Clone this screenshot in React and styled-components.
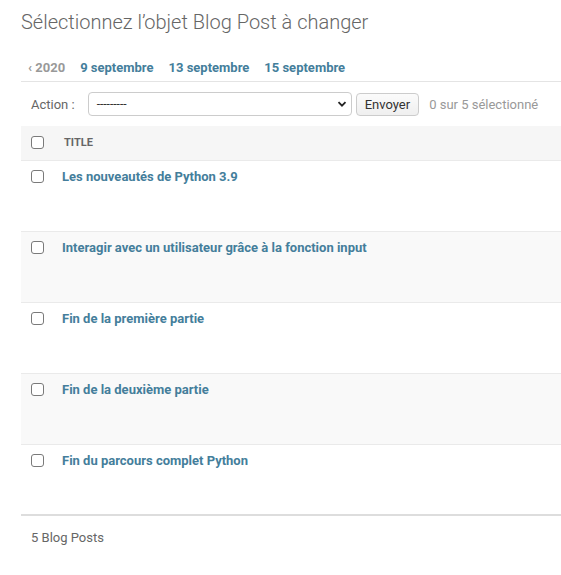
import React from "react";
import styled, { createGlobalStyle } from "styled-components";

const Global = createGlobalStyle`
  html, body { margin: 0; padding: 0; background: #fff; }
  body { font-family: Roboto, "Liberation Sans", sans-serif; color: #333; }
`;

const Page = styled.div`
  padding: 10px 0 0 21px;
  width: 540px;
`;

const Title = styled.h1`
  margin: 0 0 24px;
  font-size: 20px;
  line-height: 25px;
  font-weight: 300;
  color: #666;
`;

const DateBar = styled.ul`
  list-style: none;
  margin: 0;
  padding: 0 0 4px 7px;
  display: flex;
  gap: 15px;
  border-bottom: 1px solid #e4e4e4;
  font-size: 13px;
  line-height: 18px;
  font-weight: 700;
`;

const DateLink = styled.li`
  color: ${(p) => (p.$muted ? "#999" : "#447e9b")};
`;

const Actions = styled.div`
  height: 44px;
  display: flex;
  align-items: center;
  padding: 0 10px;
  font-size: 13px;
  color: #666;
`;

const Label = styled.span`
  margin-right: 13px;
`;

const Select = styled.div`
  box-sizing: border-box;
  width: 264px;
  height: 24px;
  border: 1px solid #ccc;
  border-radius: 4px;
  display: flex;
  align-items: center;
  justify-content: space-between;
  padding: 0 4px 0 8px;
  color: #333;
  font-size: 12px;
  margin-right: 4px;
`;

const Button = styled.span`
  box-sizing: border-box;
  height: 23px;
  padding: 0 8px;
  display: flex;
  align-items: center;
  border: 1px solid #ccc;
  border-radius: 4px;
  background: linear-gradient(#fbfbfb, #efefef);
  color: #333;
  font-size: 13px;
  margin-right: 10px;
`;

const Counter = styled.span`
  color: #999;
`;

const Table = styled.table`
  width: 100%;
  border-collapse: collapse;
`;

const HeadRow = styled.tr`
  background: #f6f6f6;
  border-bottom: 1px solid #eaeaea;
  height: 34px;
`;

const Th = styled.th`
  text-align: left;
  padding: ${(p) => (p.$check ? "0 0 0 10px" : "0 0 0 2px")};
  width: ${(p) => (p.$check ? "31px" : "auto")};
  font-size: 11px;
  font-weight: 700;
  text-transform: uppercase;
  color: #666;
  vertical-align: middle;
  line-height: 14px;
`;

const Row = styled.tr`
  background: ${(p) => (p.$alt ? "#f9f9f9" : "#fff")};
  border-bottom: 1px solid #eaeaea;
  height: 71px;
  &:last-child { border-bottom: 2px solid #ddd; }
`;

const Td = styled.td`
  vertical-align: top;
  padding: ${(p) => (p.$check ? "9px 0 0 10px" : "9px 0 0 0")};
  font-size: 13px;
  line-height: 14px;
  font-weight: 700;
  color: #447e9b;
`;

const Box = styled.span`
  display: block;
  box-sizing: border-box;
  width: 13px;
  height: 13px;
  border: 1px solid #7a7a7a;
  border-radius: 3px;
  background: #fff;
`;

const Footer = styled.p`
  margin: 0;
  padding: 14px 10px 12px;
  font-size: 13px;
  line-height: 16px;
  color: #666;
`;

const posts = [
  "Les nouveautés de Python 3.9",
  "Interagir avec un utilisateur grâce à la fonction input",
  "Fin de la première partie",
  "Fin de la deuxième partie",
  "Fin du parcours complet Python",
];

export default function App() {
  return (
    <Page>
      <Global />
      <Title>Sélectionnez l’objet Blog Post à changer</Title>
      <DateBar>
        <DateLink $muted>‹ 2020</DateLink>
        <DateLink>9 septembre</DateLink>
        <DateLink>13 septembre</DateLink>
        <DateLink>15 septembre</DateLink>
      </DateBar>
      <Actions>
        <Label>Action :</Label>
        <Select>
          <span>---------</span>
          <svg width="10" height="8" viewBox="0 0 10 8">
            <path d="M1.5 2.2 L5 5.7 L8.5 2.2" fill="none" stroke="#222" strokeWidth="1.8" />
          </svg>
        </Select>
        <Button>Envoyer</Button>
        <Counter>0 sur 5 sélectionné</Counter>
      </Actions>
      <Table>
        <thead>
          <HeadRow>
            <Th $check><Box /></Th>
            <Th>Title</Th>
          </HeadRow>
        </thead>
        <tbody>
          {posts.map((t, i) => (
            <Row key={t} $alt={i % 2 === 1}>
              <Td $check><Box /></Td>
              <Td>{t}</Td>
            </Row>
          ))}
        </tbody>
      </Table>
      <Footer>5 Blog Posts</Footer>
    </Page>
  );
}
